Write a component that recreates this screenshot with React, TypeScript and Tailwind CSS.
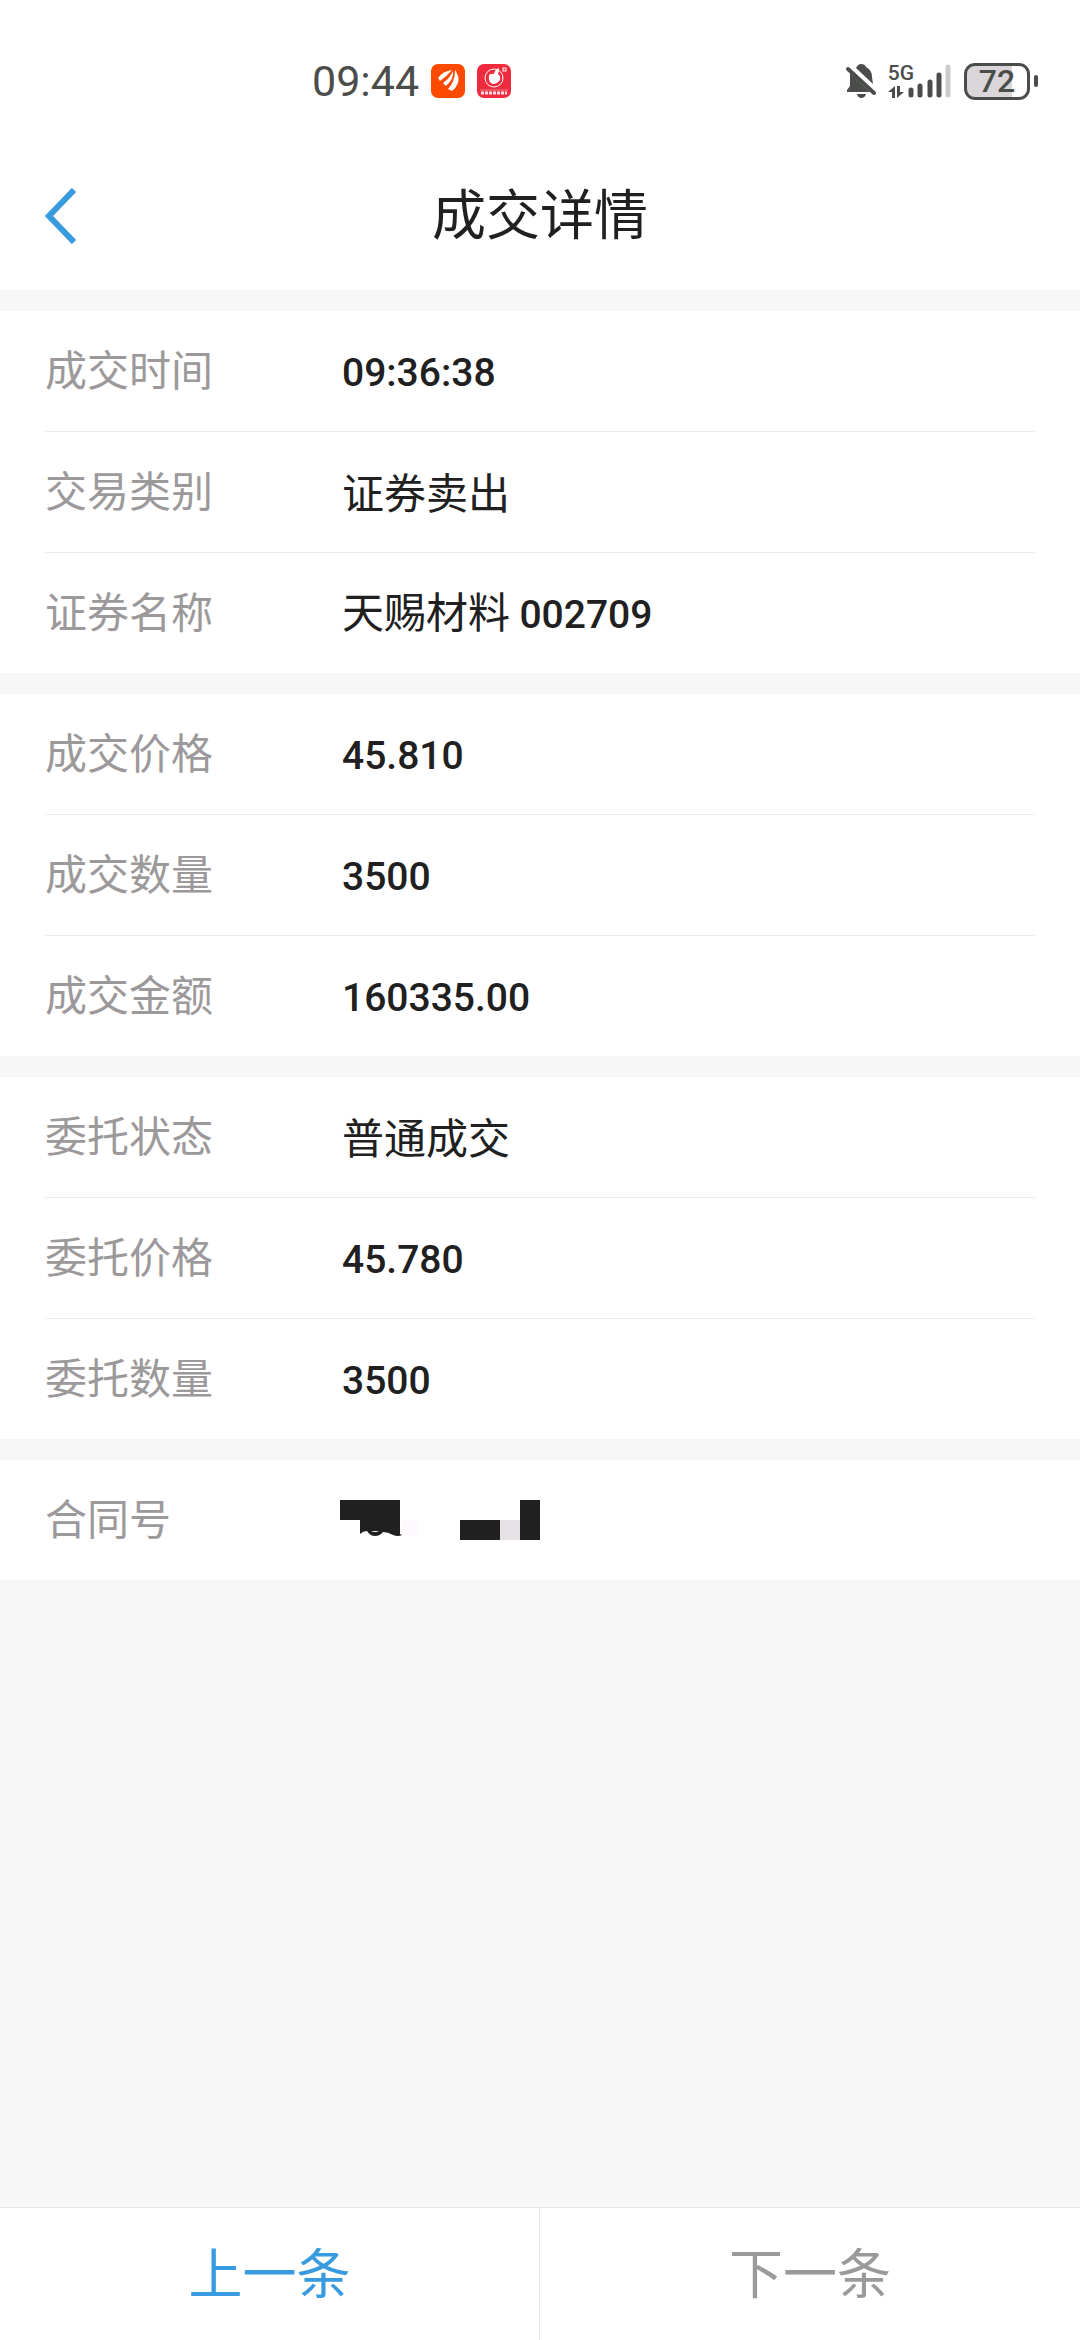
import type { ReactNode } from 'react'

interface DetailRow {
    label: string
    value: ReactNode
}

const INK = '#4b4d4a'

const sections: DetailRow[][] = [
    [
        { label: '成交时间', value: '09:36:38' },
        { label: '交易类别', value: '证券卖出' },
        { label: '证券名称', value: '天赐材料 002709' },
    ],
    [
        { label: '成交价格', value: '45.810' },
        { label: '成交数量', value: '3500' },
        { label: '成交金额', value: '160335.00' },
    ],
    [
        { label: '委托状态', value: '普通成交' },
        { label: '委托价格', value: '45.780' },
        { label: '委托数量', value: '3500' },
    ],
    [{ label: '合同号', value: <MaskedNumber /> }],
]

function MaskedNumber() {
    return (
        <svg width="200" height="40" viewBox="0 0 200 40" role="img" aria-label="合同号已隐藏">
            <path d="M61 20H80V37L61 34Z" fill="#fdf9fd" />
            <path d="M0 0H60V34L62 35Q58 37 53 35Q48 32 43 32Q40 36 35 36Q30 36 27 31Q23 31 20 34V20H0Z" fill="#202020" />
            <path d="M31 31H39Q35 33 31 31Z" fill="#fff" />
            <path d="M120 20H160V40H120Z" fill="#202020" />
            <path d="M160 20H180V40H160Z" fill="#e6e1e5" />
            <path d="M180 0H200V40H180Z" fill="#202020" />
        </svg>
    )
}

function OrangeAppIcon() {
    return (
        <svg width="34" height="34" viewBox="0 0 34 34" aria-hidden="true">
            <rect width="34" height="34" rx="7" fill="#fd4a03" />
            <g fill="#fff">
                <path d="M7 14Q12 7 21 6Q16 12 9 17Z" />
                <path d="M12 19Q19 14 22 7Q23 15 15 22Z" />
                <path d="M17 25Q24 18 24 6Q29 13 27 19Q25 24 21 27Z" />
            </g>
        </svg>
    )
}

function RedAppIcon() {
    return (
        <svg width="34" height="34" viewBox="0 0 34 34" aria-hidden="true">
            <rect width="34" height="34" rx="7" fill="#f02b3d" />
            <circle cx="17" cy="14" r="9" fill="none" stroke="#fff" strokeWidth="1" />
            <path d="M12 11Q15 9 17 10Q18 5 22 4Q22 8 21 10Q24 12 23 16Q20 20 16 20Q11 19 12 11Z" fill="#fff" />
            <rect x="26" y="4" width="3" height="3" fill="none" stroke="#fff" />
            <path d="M3 26H31" stroke="#fff" strokeOpacity="0.4" />
            <path d="M4 29H30" stroke="#fff" strokeOpacity="0.85" strokeWidth="3" strokeDasharray="3 1" />
        </svg>
    )
}

function MutedBell() {
    return (
        <svg width="30" height="34" viewBox="0 0 30 34" fill={INK} aria-hidden="true">
            <path d="M10 4Q12 0 15 0Q19 0 20 3Q26 6 26 13L27 20Z" />
            <path d="M4 9L24 28H1V26L4 22Z" />
            <path d="M2 5L28 29" stroke={INK} strokeWidth="4" strokeLinecap="round" />
            <path d="M11 30H20Q19 34 15 34Q12 34 11 30Z" />
        </svg>
    )
}

function DataArrows() {
    return (
        <svg width="16" height="12" viewBox="0 0 16 12" fill={INK} aria-hidden="true">
            <path d="M7 0V12H4V6H0Z" />
            <path d="M9 0H12V6H16L9 12Z" />
        </svg>
    )
}

function SignalBars() {
    return (
        <svg width="44" height="34" viewBox="0 0 44 34" strokeWidth="5" strokeLinecap="round" aria-hidden="true">
            <path d="M3 26V31M12 22V31M22 18V31M31 11V31" stroke={INK} />
            <path d="M40 3V31" stroke="#cbcbcb" />
        </svg>
    )
}

function StatusBar() {
    return (
        <div className="flex h-[162px] items-center justify-between pr-[42px] pl-[312px] text-[#4b4d4a]">
            <div className="flex items-center gap-3">
                <span className="text-[43px] leading-none">09:44</span>
                <OrangeAppIcon />
                <RedAppIcon />
            </div>
            <div className="flex items-center">
                <MutedBell />
                <div className="ml-3 -mr-1.5 flex h-[34px] flex-col justify-between">
                    <span className="text-[21px] leading-[18px] font-medium">5G</span>
                    <DataArrows />
                </div>
                <SignalBars />
                <div className="ml-3 flex items-center gap-1">
                    <div className="flex h-[37px] w-[66px] items-center justify-center rounded-[11px] border-3 border-[#4b4d4a] bg-linear-to-r from-[#dad5d9] from-75% to-white to-75% text-[32px] leading-none font-medium">
                        72
                    </div>
                    <div className="h-3 w-1 rounded-sm bg-[#4b4d4a]" />
                </div>
            </div>
        </div>
    )
}

function DetailSection({ rows }: { rows: DetailRow[] }) {
    return (
        <dl className="divide-y divide-[#ebebeb] bg-white px-[45px]">
            {rows.map((row) => (
                <div key={row.label} className="box-content flex h-[120px] items-center">
                    <dt className="w-[295px] pt-px text-[42px] text-[#9b999a]">{row.label}</dt>
                    <dd className="text-[#202020]">
                        {typeof row.value === 'string' ? <DetailValue text={row.value} /> : row.value}
                    </dd>
                </div>
            ))}
        </dl>
    )
}

// Digits are set a step smaller and heavier than the Chinese text beside them
function DetailValue({ text }: { text: string }) {
    return (
        <p className="pb-1 pl-0.5 font-['Noto_Sans_CJK_SC',sans-serif] text-[42px]">
            {text.split(/([\d:.]+)/).map((part, i) =>
                i % 2 === 1 ? (
                    <span key={i} className="font-[Roboto,sans-serif] text-[39px] font-medium">{part}</span>
                ) : (
                    part
                ),
            )}
        </p>
    )
}

export default function App() {
    return (
        <div className="flex min-h-screen flex-col bg-[#f7f7f7] font-[Roboto,'Noto_Sans_CJK_SC',sans-serif]">
            <header className="bg-white">
                <StatusBar />
                <div className="grid h-32 grid-cols-[1fr_auto_1fr] items-start px-[45px]">
                    <button type="button" aria-label="返回" className="h-[108px] w-8">
                        <svg width="32" height="56" viewBox="0 0 32 56" fill="none" stroke="#389be0" strokeWidth="6" aria-hidden="true">
                            <path d="M29 2L4 28L29 54" />
                        </svg>
                    </button>
                    <h1 className="text-[54px] leading-[110px] text-[#202020]">成交详情</h1>
                </div>
            </header>
            <main className="mt-[21px] flex flex-1 flex-col gap-[21px]">
                {sections.map((rows) => (
                    <DetailSection key={rows[0].label} rows={rows} />
                ))}
            </main>
            <nav className="grid h-[133px] grid-cols-2 divide-x divide-[#ebebeb] border-t border-[#e6e6e6] bg-white text-[54px]">
                <button type="button" className="pt-0.5 text-[#389be0]">上一条</button>
                <button type="button" className="pt-0.5 text-[#9b999a]">下一条</button>
            </nav>
        </div>
    )
}
